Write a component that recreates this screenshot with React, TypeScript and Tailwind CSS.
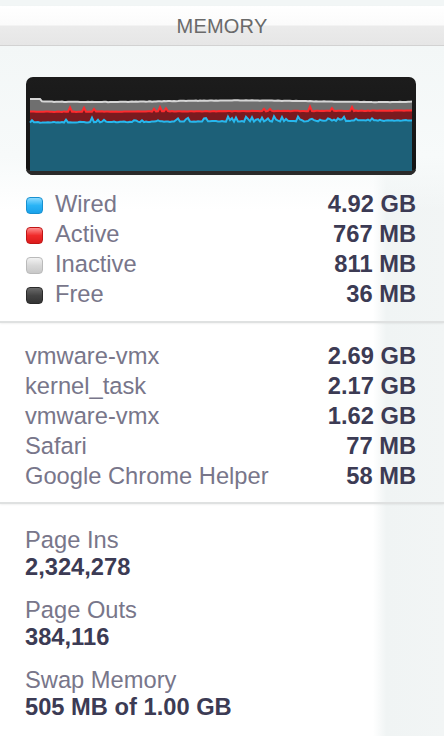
import React from 'react';

const font = { fontFamily: '"Liberation Sans", Arial, sans-serif' };

// deterministic noise for the chart lines
const makeRand = (seed: number) => {
  let s = seed;
  return () => {
    s = (s * 16807) % 2147483647;
    return s / 2147483647;
  };
};

const MemoryChart: React.FC = () => {
  const x0 = 4;
  const x1 = 386;
  const n = 192;
  const rand = makeRand(42);
  const xs = Array.from({ length: n }, (_, i) => x0 + (i * (x1 - x0)) / (n - 1));

  const white = xs.map((x, i) => (i < 6 ? 22 : 24 + 0.8 * Math.sin(x / 45) + rand() * 0.4));
  const red = xs.map((x) => {
    const r = rand();
    const busy = x > 170 && x < 320;
    if (r < (busy ? 0.14 : 0.05)) return 33 - 1 - rand() * 2.5;
    return 34.5 - (x / 386) * 1.2 + rand() * 0.6;
  });
  const blue = xs.map((x) => {
    const r = rand();
    const busy = x > 200 && x < 320;
    if (r < (busy ? 0.4 : 0.16)) return 43.5 - rand() * (busy ? 4.5 : 3);
    return 45 - (x / 386) * 2 + rand() * 0.8;
  });

  const line = (ys: number[]) => ys.map((y, i) => `${i === 0 ? 'M' : 'L'}${xs[i].toFixed(1)} ${y.toFixed(1)}`).join(' ');
  const area = (ys: number[]) => `${line(ys)} L${x1} 94 L${x0} 94 Z`;

  return (
    <svg width="390" height="98" viewBox="0 0 390 98" className="block">
      <defs>
        <linearGradient id="top" x1="0" y1="0" x2="0" y2="1">
          <stop offset="0" stopColor="#1c1c1c" />
          <stop offset="1" stopColor="#131313" />
        </linearGradient>
        <clipPath id="clip">
          <rect x="0" y="0" width="390" height="98" rx="7" />
        </clipPath>
      </defs>
      <g clipPath="url(#clip)">
        <rect x="0" y="0" width="390" height="98" fill="url(#top)" />
        <rect x="0" y="93" width="390" height="5" fill="#2a2a2a" />
        <path d={area(white)} fill="#6f6f6f" />
        <path d={area(red)} fill="#7b1a1f" />
        <path d={area(blue)} fill="#1d6078" />
        <path d={line(white)} fill="none" stroke="#d6d6d6" strokeWidth="2" />
        <path d={line(red)} fill="none" stroke="#ff2b2e" strokeWidth="2" />
        <path d={line(blue)} fill="none" stroke="#27b8ee" strokeWidth="2" />
      </g>
    </svg>
  );
};

const legend = [
  { label: 'Wired', value: '4.92 GB', swatch: 'bg-[linear-gradient(#8adaff,#2ab4f6_50%,#1aa2ea)] border-[#1790d0]' },
  { label: 'Active', value: '767 MB', swatch: 'bg-[linear-gradient(#ff8e8e,#f02b2b_50%,#dc1c1c)] border-[#c01616]' },
  { label: 'Inactive', value: '811 MB', swatch: 'bg-[linear-gradient(#f2f2f2,#d8d8d8_50%,#c8c8c8)] border-[#bababa]' },
  { label: 'Free', value: '36 MB', swatch: 'bg-[linear-gradient(#6a6a6a,#444444_50%,#343434)] border-[#2a2a2a]' },
];

const processes = [
  { name: 'vmware-vmx', value: '2.69 GB' },
  { name: 'kernel_task', value: '2.17 GB' },
  { name: 'vmware-vmx', value: '1.62 GB' },
  { name: 'Safari', value: '77 MB' },
  { name: 'Google Chrome Helper', value: '58 MB' },
];

const stats = [
  { label: 'Page Ins', value: '2,324,278' },
  { label: 'Page Outs', value: '384,116' },
  { label: 'Swap Memory', value: '505 MB of 1.00 GB' },
];

const Divider = () => <div className="h-[2px] bg-[#dfe1e1] shadow-[0_1px_2px_rgba(0,0,0,0.06)]" />;

export default function App() {
  return (
    <div
      style={font}
      className="w-[444px] h-[736px] overflow-hidden bg-[linear-gradient(to_right,#ffffff_84%,#f0f4f4_87%,#f2f5f5_100%)] text-[23.7px]"
    >
      <div className="h-[6px] bg-[#f2f6f6]" />
      {/* header bar */}
      <div className="h-[40px] flex items-center justify-center bg-[linear-gradient(#ffffff,#fbfbfb_48%,#ebebeb_52%,#e6e6e6)] border-b border-[#d2d2d2] shadow-[0_2px_3px_rgba(0,0,0,0.08)]">
        <span className="text-[20px] text-[#6a6a6a] tracking-[0.2px] leading-none">MEMORY</span>
      </div>

      {/* chart + legend */}
      <div className="pt-[31px] pb-[11px] pl-[26px] pr-[28px] bg-[linear-gradient(#f3f7f7,#f7fafa_40%,rgba(255,255,255,0)_60%)]">
        <MemoryChart />
        <div className="mt-[15px]">
          {legend.map((l) => (
            <div key={l.label} className="h-[30px] flex items-center">
              <span className={`w-[17px] h-[17px] rounded-[4px] border ${l.swatch}`} />
              <span className="ml-[12px] text-[#78768a]">{l.label}</span>
              <span className="ml-auto font-bold text-[#3c3b54]">{l.value}</span>
            </div>
          ))}
        </div>
      </div>

      <Divider />

      <div className="pt-[19px] pb-[10px] pl-[25px] pr-[28px]">
        {processes.map((p, i) => (
          <div key={i} className="h-[30px] flex items-center">
            <span className="text-[#78768a]">{p.name}</span>
            <span className="ml-auto font-bold text-[#3c3b54]">{p.value}</span>
          </div>
        ))}
      </div>

      <Divider />

      <div className="pt-[23px] pl-[25px] pr-[28px] flex flex-col gap-[15px]">
        {stats.map((s) => (
          <div key={s.label}>
            <div className="h-[27px] flex items-center text-[#78768a]">{s.label}</div>
            <div className="h-[28px] flex items-center font-bold text-[#3c3b54]">{s.value}</div>
          </div>
        ))}
      </div>
    </div>
  );
}
